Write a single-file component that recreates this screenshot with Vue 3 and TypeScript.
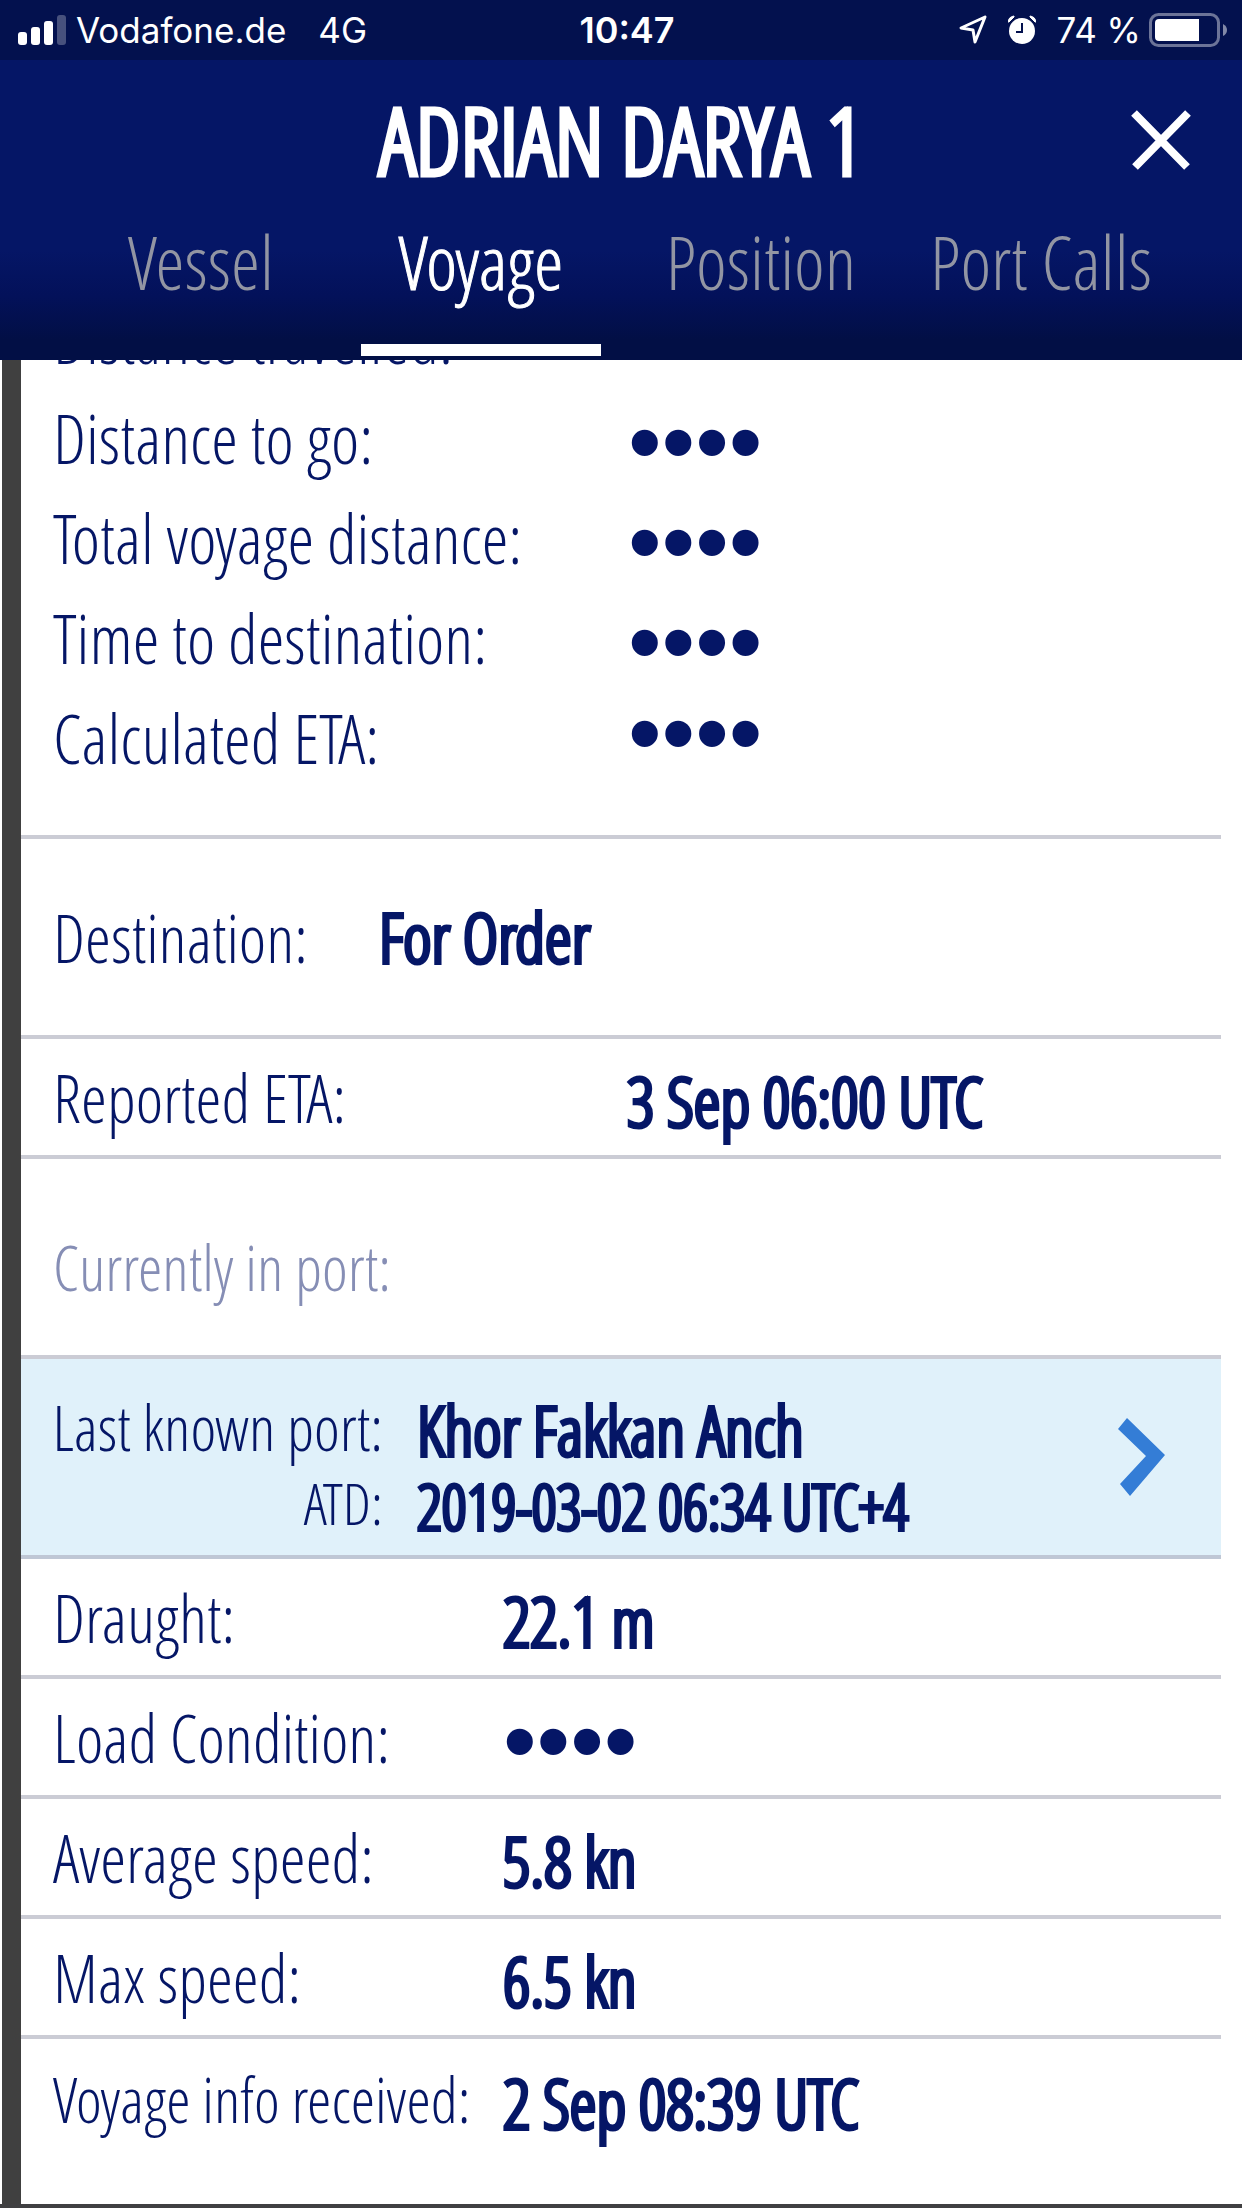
<script setup lang="ts">
import { ref } from 'vue'

interface Entry {
  label: string
  value: string
  layout: string
  masked?: boolean
}

const tabs = ['Vessel', 'Voyage', 'Position', 'Port Calls']
const activeTab = ref('Voyage')

const hidden = '••••'

const estimates = [
  'Distance travelled:',
  'Distance to go:',
  'Total voyage distance:',
  'Time to destination:',
  'Calculated ETA:',
]

const schedule: Entry[] = [
  { label: 'Destination:', value: 'For Order', layout: 'tall near' },
  { label: 'Reported ETA:', value: '3 Sep 06:00 UTC', layout: 'far' },
  { label: 'Currently in port:', value: '', layout: 'tall muted tight' },
]

const details: Entry[] = [
  { label: 'Draught:', value: '22.1 m', layout: '' },
  { label: 'Load Condition:', value: hidden, layout: '', masked: true },
  { label: 'Average speed:', value: '5.8 kn', layout: '' },
  { label: 'Max speed:', value: '6.5 kn', layout: '' },
  { label: 'Voyage info received:', value: '2 Sep 08:39 UTC', layout: 'last tight' },
]
</script>

<template>
  <div class="screen">
    <div class="status">
      <div class="status-left">
        <svg class="signal" width="48" height="30" viewBox="0 0 48 30" aria-hidden="true">
          <rect x="0" y="17" width="9" height="13" rx="3" fill="#fff" />
          <rect x="13" y="12" width="9" height="18" rx="3" fill="#fff" />
          <rect x="26" y="6" width="9" height="24" rx="3" fill="#fff" />
          <rect x="39" y="0" width="9" height="30" rx="3" fill="#fff" opacity="0.27" />
        </svg>
        <span>Vodafone.de</span>
        <span class="network">4G</span>
      </div>
      <time class="clock">10:47</time>
      <div class="status-right">
        <svg class="location" width="28" height="30" viewBox="0 0 28 30" aria-hidden="true">
          <path d="M26 2 L2 13 L14 15 L16 27 Z" fill="none" stroke="#fff" stroke-width="3" stroke-linejoin="round" />
        </svg>
        <svg class="alarm" width="28" height="30" viewBox="0 0 28 30" aria-hidden="true">
          <circle cx="14" cy="16" r="13" fill="#fff" />
          <path d="M14 8 V17 H8" fill="none" stroke="#03114e" stroke-width="2" />
          <path d="M0 7 A7 7 0 0 1 6 1 L6 2 L1 7 Z M28 7 A7 7 0 0 0 22 1 L22 2 L27 7 Z" fill="#fff" stroke="#fff" />
        </svg>
        <span>74 %</span>
        <svg class="battery" width="79" height="34" viewBox="0 0 79 34" aria-hidden="true">
          <rect x="1.5" y="1.5" width="68" height="31" rx="8" fill="none" stroke="#fff" stroke-width="3" opacity="0.42" />
          <path d="M10 6 H50 V28 H10 Q6 28 6 24 V10 Q6 6 10 6 Z" fill="#fff" />
          <path d="M74 11 Q78 13 78 17 Q78 21 74 23 Z" fill="#fff" opacity="0.5" />
        </svg>
      </div>
    </div>

    <header class="header">
      <div class="title-bar">
        <h1 class="title">ADRIAN DARYA 1</h1>
        <button class="close" type="button" aria-label="Close">
          <svg width="60" height="60" viewBox="0 0 60 60" aria-hidden="true">
            <path d="M3 3 L56 57 M57 3 L4 57" stroke="#fff" stroke-width="8" />
          </svg>
        </button>
      </div>
      <nav class="tabs">
        <button
          v-for="tab in tabs"
          :key="tab"
          type="button"
          class="tab"
          :class="{ active: tab === activeTab }"
          @click="activeTab = tab"
        >
          {{ tab }}
        </button>
      </nav>
    </header>

    <main class="content">
      <dl class="group estimates">
        <div v-for="label in estimates" :key="label" class="estimate">
          <dt>{{ label }}</dt>
          <dd class="dots">{{ hidden }}</dd>
        </div>
      </dl>

      <dl class="group">
        <div v-for="row in schedule" :key="row.label" class="row" :class="row.layout">
          <dt>{{ row.label }}</dt>
          <dd>{{ row.value }}</dd>
        </div>
      </dl>

      <a class="port" href="#port">
        <span class="port-label">Last known port:</span>
        <b class="port-name">Khor Fakkan Anch</b>
        <span class="port-label small">ATD:</span>
        <b class="port-time">2019-03-02 06:34 UTC+4</b>
        <svg class="chevron" width="48" height="78" viewBox="0 0 48 78" aria-hidden="true">
          <path d="M9 0 L47 37 L12 78 L2 66 L28 38 L0 11 Z" fill="#347dd6" />
        </svg>
      </a>

      <dl class="group">
        <div v-for="row in details" :key="row.label" class="row" :class="row.layout">
          <dt>{{ row.label }}</dt>
          <dd :class="{ dots: row.masked }">{{ row.value }}</dd>
        </div>
      </dl>
    </main>
  </div>
</template>

<style>
body {
  margin: 0;
  background: #fff;
}
</style>

<style scoped>
.screen {
  display: flex;
  flex-direction: column;
  min-height: 100vh;
  overflow: hidden;
  color: #051666;
  font-family: 'Open Sans Condensed Light', 'Open Sans Condensed', 'Roboto Condensed', sans-serif;
  font-size: 66px;
  line-height: 80px;
}

.status {
  display: grid;
  grid-template-columns: 1fr auto 1fr;
  align-items: center;
  height: 60px;
  padding: 0 14px 0 18px;
  background: #03114e;
  color: #fff;
  font-family: Inter, sans-serif;
  font-size: 35px;
  line-height: 60px;
  white-space: nowrap;
}

.status-left,
.status-right {
  display: flex;
  align-items: center;
}

.status-right {
  justify-content: flex-end;
}

.signal {
  margin-right: 10px;
}

.network {
  margin-left: 32px;
}

.clock {
  margin-left: 8px;
  font-size: 36px;
  font-weight: 600;
}

.location {
  margin-right: 21px;
}

.alarm {
  margin-right: 20px;
}

.battery {
  margin-left: 8px;
}

.header {
  position: relative;
  z-index: 1;
  height: 300px;
  background: linear-gradient(#051666 0, #051666 190px, #03115a 235px, #020f45 280px, #020f45 100%);
  color: #fff;
}

.title-bar {
  display: grid;
  grid-template-columns: 1fr auto 1fr;
  align-items: center;
  height: 160px;
}

.title {
  grid-column: 2;
  margin: 0;
  font-size: 92px;
  font-weight: 700;
  font-kerning: none;
  line-height: 100px;
  white-space: nowrap;
  -webkit-text-stroke: 2px currentColor;
}

.close {
  display: grid;
  justify-self: end;
  margin-right: 51px;
  padding: 0;
  border: 0;
  background: none;
}

.tabs {
  display: grid;
  grid-template-columns: repeat(4, 1fr);
  height: 140px;
  padding: 0 61px;
}

.tab {
  margin: 0 20px 4px;
  padding: 0 0 40px;
  border: 0;
  border-bottom: 12px solid transparent;
  background: none;
  color: #9295a3;
  font: inherit;
  font-size: 74px;
  line-height: 80px;
  white-space: nowrap;
}

.tab.active {
  border-bottom-color: #fff;
  color: #fff;
  -webkit-text-stroke: 1px currentColor;
}

.content {
  display: flex;
  flex: 1;
  flex-direction: column;
  padding-right: 21px;
  border-bottom: 4px solid #404042;
  background: linear-gradient(90deg, #fff 2px, #404040 2px, #404040 21px, #fff 21px);
}

.group,
dt,
dd {
  margin: 0;
}

.group,
.port {
  margin-left: 21px;
}

.estimates {
  margin-top: -72px;
  padding-bottom: 47px;
  border-bottom: 4px solid #cbccd5;
  font-size: 68px;
}

.estimate,
.row {
  display: grid;
  align-items: center;
  box-sizing: border-box;
  padding-left: 32px;
  white-space: nowrap;
}

.estimate {
  grid-template-columns: 575px 1fr;
  height: 100px;
}

.row {
  grid-template-columns: 450px 1fr;
  height: 120px;
  border-bottom: 4px solid #cbccd5;
}

.row.near {
  grid-template-columns: 326px 1fr;
}

.row.far {
  grid-template-columns: 574px 1fr;
}

.row.tall {
  height: 200px;
}

.row.muted {
  padding-top: 20px;
  color: #868eb5;
}

.row.last {
  border-bottom: 0;
}

.tight dt,
.port-label {
  font-size: 62px;
}

dd,
.port b {
  padding-top: 8px;
  font-size: 68px;
  font-weight: 700;
  -webkit-text-stroke: 2px currentColor;
}

.near dd {
  padding-top: 0;
}

dd.dots {
  padding-top: 8px;
  font-family: 'Liberation Sans', sans-serif;
  font-size: 96px;
  font-weight: 400;
  line-height: 80px;
  -webkit-text-stroke: 0;
}

.estimate:last-child .dots {
  padding: 0 0 10px;
}

.port {
  display: grid;
  grid-template-columns: 330px 1fr auto;
  grid-template-rows: 80px 72px;
  align-content: center;
  align-items: center;
  column-gap: 34px;
  height: 196px;
  padding: 0 55px 0 32px;
  border-bottom: 4px solid #bfc7d5;
  background: #e0f1fa;
  color: inherit;
  text-decoration: none;
  white-space: nowrap;
}

.port-label {
  justify-self: end;
  padding-top: 12px;
}

.port-label.small {
  font-size: 58px;
}

.port b {
  padding-top: 18px;
}

.port .port-time {
  font-size: 62px;
}

.chevron {
  grid-row: 1 / 3;
  grid-column: 3;
}
</style>
